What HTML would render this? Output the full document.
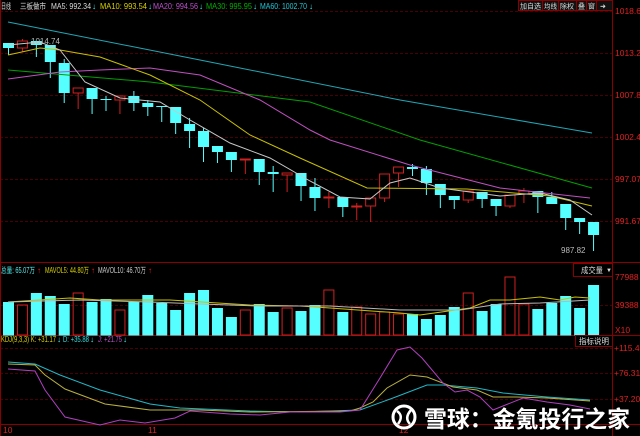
<!DOCTYPE html>
<html><head><meta charset="utf-8"><style>
html,body{margin:0;padding:0;background:#000;width:640px;height:436px;overflow:hidden}
svg{display:block}
text{font-family:"Liberation Sans","Noto Sans CJK SC",sans-serif}
</style></head><body>
<svg id="s" width="640" height="436" xmlns="http://www.w3.org/2000/svg">
<rect width="640" height="436" fill="#000"/>
<g stroke="#4a0000" stroke-width="1" stroke-dasharray="3,2">
<line x1="0" y1="11.5" x2="612" y2="11.5"/><line x1="0" y1="53.5" x2="612" y2="53.5"/>
<line x1="0" y1="95.5" x2="612" y2="95.5"/><line x1="0" y1="137.5" x2="612" y2="137.5"/>
<line x1="0" y1="179.5" x2="612" y2="179.5"/><line x1="0" y1="221.5" x2="612" y2="221.5"/>
<line x1="0" y1="305.5" x2="612" y2="305.5"/>
<line x1="0" y1="348.5" x2="612" y2="348.5"/><line x1="0" y1="373.5" x2="612" y2="373.5"/><line x1="0" y1="399.5" x2="612" y2="399.5"/>
</g>
<g stroke="#8a0000" stroke-width="1">
<line x1="0.5" y1="0" x2="0.5" y2="436"/>
<line x1="612.5" y1="0" x2="612.5" y2="436"/>
<line x1="0" y1="262.5" x2="640" y2="262.5"/>
<line x1="0" y1="335.5" x2="640" y2="335.5"/>
<line x1="0" y1="424.5" x2="640" y2="424.5"/>
</g>
<g id="cd"></g>
<g fill="none" stroke-width="1">
<polyline stroke="#1fa8b8" points="8,22 200,60 400,100 592,133"/>
<polyline stroke="#00a000" points="8,70 150,82 310,102 420,140 592,188"/>
<polyline stroke="#c050c0" points="8,79 60,72 100,70 150,68 200,75 260,100 310,130 330,140 410,165 500,188 590,198"/>
<polyline stroke="#c8c000" points="8,55 40,48 60,50 100,57 150,75 200,100 250,135 300,158 367,188 467,189 550,196 592,206"/>
<polyline stroke="#c8c8c8" points="8,45 40,42 60,50 85,82 120,98 160,102 190,120 230,143 270,158 310,181 340,197 370,199 390,183 410,178 440,188 500,196 540,193 570,200 592,215"/>
<polyline stroke="#c8c000" points="8,302 70,298 100,300 170,300 250,305 300,306 330,308 400,313 420,315 470,308 490,300 510,300 540,297 560,300 575,297 590,298"/>
<polyline stroke="#b8b8b8" points="8,302 80,300 150,302 200,304 260,306 330,306 400,310 460,310 500,304 540,303 590,300"/>
<polyline stroke="#1fb8c8" points="8,362 35,364 60,375 100,390 150,404 180,408 250,411 300,412 360,410 393,398 427,385 443,385 477,388 503,393 547,397 590,400"/>
<polyline stroke="#b8b040" points="8,364 35,365 45,375 65,389 105,404 150,410 200,410 250,412 350,411 360,408 373,402 387,388 410,375 427,377 453,387 477,390 493,397 517,397 547,398 590,401"/>
<polyline stroke="#b040c0" points="8,369 35,371 45,390 65,417 100,425 120,420 145,423 175,418 190,411 230,414 260,415 290,412 340,412 360,410 380,378 397,350 410,347 422,358 443,383 455,392 467,390 480,397 493,410 523,398 547,402 570,405 590,409"/>
</g>
<g font-size="8" lengthAdjust="spacingAndGlyphs">
<text x="1" y="9" fill="#ddd" textLength="10" lengthAdjust="spacingAndGlyphs">日线</text>
<text x="20" y="9" fill="#ddd" textLength="26" lengthAdjust="spacingAndGlyphs">三板做市</text>
<text x="51" y="9" fill="#ddd" textLength="40" lengthAdjust="spacingAndGlyphs">MA5: 992.34</text><text x="92" y="9" fill="#4ee">↓</text>
<text x="100" y="9" fill="#d8d000" textLength="47" lengthAdjust="spacingAndGlyphs">MA10: 993.54</text><text x="148" y="9" fill="#4ee">↓</text>
<text x="153" y="9" fill="#c050d0" textLength="45" lengthAdjust="spacingAndGlyphs">MA20: 994.56</text><text x="199" y="9" fill="#4ee">↓</text>
<text x="206" y="9" fill="#00b000" textLength="46" lengthAdjust="spacingAndGlyphs">MA30: 995.95</text><text x="253" y="9" fill="#4ee">↓</text>
<text x="260" y="9" fill="#1fc8d8" textLength="47" lengthAdjust="spacingAndGlyphs">MA60: 1002.70</text><text x="309" y="9" fill="#4ee">↓</text>
<text x="31" y="44" fill="#bbb">1014.74</text>
<text x="561" y="253" fill="#bbb">987.82</text>
<text x="1" y="273" fill="#5ee" textLength="34" lengthAdjust="spacingAndGlyphs">总量: 65.07万</text><text x="37" y="273" fill="#e22">↑</text>
<text x="45" y="273" fill="#d8d000" textLength="44" lengthAdjust="spacingAndGlyphs">MAVOL5: 44.80万</text><text x="91" y="273" fill="#e22">↑</text>
<text x="98" y="273" fill="#ccc" textLength="48" lengthAdjust="spacingAndGlyphs">MAVOL10: 46.70万</text><text x="148" y="273" fill="#e22">↑</text>
<text x="1" y="342" fill="#d8d000" textLength="55" lengthAdjust="spacingAndGlyphs">KDJ(9,3,3) K: +31.17</text><text x="57" y="342" fill="#4ee">↓</text>
<text x="63" y="342" fill="#3dd" textLength="26" lengthAdjust="spacingAndGlyphs">D: +35.88</text><text x="90" y="342" fill="#4ee">↓</text>
<text x="98" y="342" fill="#c050d0" textLength="24" lengthAdjust="spacingAndGlyphs">J: +21.75</text><text x="123" y="342" fill="#4ee">↓</text>
<g fill="#e02020" font-size="8.5">
<text x="615" y="14">1018.66</text><text x="615" y="56">1013.26</text><text x="615" y="98">1007.86</text>
<text x="615" y="140">1002.46</text><text x="615" y="182">997.07</text><text x="615" y="224">991.67</text>
<text x="615" y="280">77988</text><text x="615" y="308">39388</text><text x="615" y="333">X10</text>
<text x="614" y="351">+115.4</text><text x="614" y="376">+76.31</text><text x="614" y="402">+37.20</text>
<text x="3" y="433">10</text><text x="148" y="433">11</text><text x="399" y="433">12</text>
</g>
</g>
<g stroke="#8a0000" fill="#111">
<rect x="518.5" y="0.5" width="24" height="10"/><rect x="542.5" y="0.5" width="16" height="10"/>
<rect x="558.5" y="0.5" width="18" height="10"/><rect x="576.5" y="0.5" width="10" height="10"/>
<rect x="586.5" y="0.5" width="10" height="10"/><rect x="596.5" y="0.5" width="16" height="10"/>
<rect x="573.5" y="263.5" width="39" height="13" fill="#000"/>
<rect x="575.5" y="335.5" width="37" height="11" fill="#000"/>
</g>
<g fill="#ddd" font-size="7">
<text x="520" y="8.5" textLength="21" lengthAdjust="spacingAndGlyphs">加自选</text>
<text x="544" y="8.5" textLength="13" lengthAdjust="spacingAndGlyphs">均线</text>
<text x="560" y="8.5" textLength="14" lengthAdjust="spacingAndGlyphs">除权</text>
<text x="578" y="8.5">叠</text><text x="588" y="8.5">窗</text><text x="600" y="8.5">➜</text>
<text x="581" y="273" font-size="8" textLength="22" lengthAdjust="spacingAndGlyphs">成交量</text><text x="606" y="272" font-size="6">▼</text>
<text x="579" y="344" font-size="8" textLength="30" lengthAdjust="spacingAndGlyphs">指标说明</text>
</g>
<g>
<circle cx="404" cy="417" r="11" fill="none" stroke="#fff" stroke-width="3"/>
<path d="M397 411 Q404 416 398 424 M411 410 Q404 418 410 424" stroke="#fff" stroke-width="2.5" fill="none"/>
<text x="424" y="427" fill="#fff" font-size="23" font-weight="bold" font-family="'Noto Sans CJK SC',sans-serif" textLength="206" lengthAdjust="spacingAndGlyphs">雪球：金氪投行之家</text>
</g>
</svg>
<script>
var c=[[43,48,43,55,0],[41,48,39,52,1],[41,45,41,57,0],[45,62,45,78,0],[63,93,59,103,0],[88,93,88,109,1],[88,99,88,114,0],[99,100,96,111,0],[96,100,96,114,1],[96,103,91,111,0],[103,107,100,116,0],[106,107,106,122,0],[107,123,107,134,0],[124,131,118,148,0],[131,147,128,162,0],[146,152,146,163,0],[152,160,152,172,0],[159,160,159,174,1],[159,172,159,185,0],[172,174,166,192,0],[173,175,173,192,1],[173,186,173,201,0],[187,198,178,211,0],[197,198,192,208,1],[197,207,197,217,0],[206,207,203,220,1],[198,206,198,222,1],[174,198,174,202,1],[167,173,167,187,1],[167,169,164,176,0],[169,183,166,195,0],[184,195,184,208,0],[196,200,196,209,0],[191,200,191,203,1],[192,199,192,208,0],[199,206,199,216,0],[195,206,195,208,1],[191,194,188,203,1],[191,197,191,213,0],[197,204,192,204,0],[204,218,204,230,0],[218,222,218,234,0],[222,235,222,251,0]];
var v=[302,305,293,296,304,293,302,299,310,302,295,303,310,293,290,308,317,310,304,312,308,311,305,290,312,307,314,312,314,314,319,315,307,293,311,304,277,304,309,303,296,308,285];
var h='';
for(var i=0;i<c.length;i++){var x=8.5+13.93*i,d=c[i],r=d[4],col=r?'#d02020':'#5ff';
var t=d[0],b=Math.max(d[1],d[0]+1);
h+='<line x1="'+x+'" y1="'+d[2]+'" x2="'+x+'" y2="'+d[3]+'" stroke="'+col+'"/>';
if(r)h+='<rect x="'+(x-5)+'" y="'+t+'" width="10" height="'+(b-t)+'" fill="#000" stroke="'+col+'"/>';
else h+='<rect x="'+(x-5.5)+'" y="'+t+'" width="11" height="'+(b-t)+'" fill="'+col+'"/>';
var vt=v[i];
if(r)h+='<rect x="'+(x-5)+'" y="'+vt+'" width="10" height="'+(335-vt)+'" fill="none" stroke="#d02020"/>';
else h+='<rect x="'+(x-5.5)+'" y="'+vt+'" width="11" height="'+(335.5-vt)+'" fill="#5ff"/>';}
document.getElementById('cd').innerHTML=h;
</script>
</body></html>
